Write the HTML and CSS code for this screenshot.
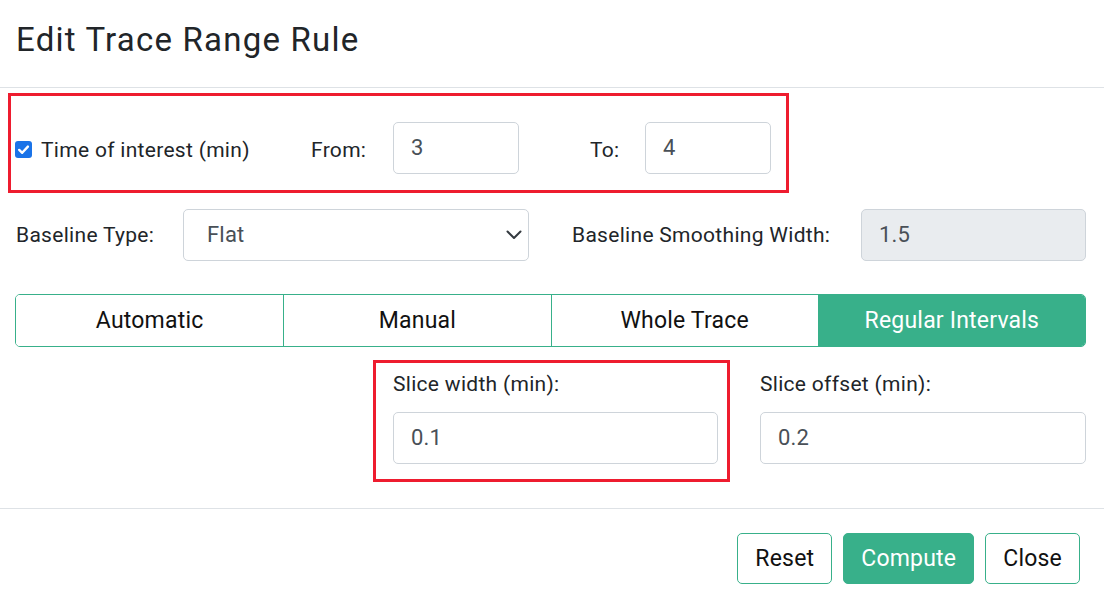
FILE: index.html
```html
<!DOCTYPE html>
<html lang="en">
<head>
<meta charset="utf-8">
<title>Edit Trace Range Rule</title>
<link rel="stylesheet" href="styles.css">
</head>
<body>
<div class="modal">
  <header class="modal-header">
    <h5 class="modal-title">Edit Trace Range Rule</h5>
  </header>

  <section class="modal-body">
    <div class="highlight toi-row">
      <label class="toi">
        <span class="check" aria-hidden="true">
          <svg viewBox="0 0 17 17" width="17" height="17"><rect x="0" y="0" width="17" height="17" rx="3" fill="#1a73e8"/><path d="M4.2 8.9 L7.2 11.8 L12.9 5.6" fill="none" stroke="#fff" stroke-width="2.4" stroke-linecap="round" stroke-linejoin="round"/></svg>
        </span>
        <span class="row-text">Time of interest (min)</span>
      </label>
      <span class="inline-label row-text from-label">From:</span>
      <div class="field small">3</div>
      <span class="inline-label row-text to-label">To:</span>
      <div class="field small">4</div>
    </div>

    <div class="baseline-row">
      <span class="inline-label type-label">Baseline Type:</span>
      <div class="field select">
        <span>Flat</span>
        <svg class="chevron" viewBox="0 0 16 10" width="16" height="10"><path d="M1.5 1.5 L8 8 L14.5 1.5" fill="none" stroke="#343a40" stroke-width="2" stroke-linecap="round" stroke-linejoin="round"/></svg>
      </div>
      <span class="inline-label smooth-label">Baseline Smoothing Width:</span>
      <div class="field disabled grow">1.5</div>
    </div>

    <div class="tabs">
      <button class="tab">Automatic</button>
      <button class="tab">Manual</button>
      <button class="tab">Whole Trace</button>
      <button class="tab active">Regular Intervals</button>
    </div>

    <div class="slice-row">
      <div class="highlight slice-col">
        <label class="field-label">Slice width (min):</label>
        <div class="field">0.1</div>
      </div>
      <div class="offset-col">
        <label class="field-label">Slice offset (min):</label>
        <div class="field">0.2</div>
      </div>
    </div>
  </section>

  <footer class="modal-footer">
    <button class="btn btn-outline">Reset</button>
    <button class="btn btn-primary">Compute</button>
    <button class="btn btn-outline">Close</button>
  </footer>
</div>
</body>
</html>
```

FILE: styles.css
```css
* {
  box-sizing: border-box;
}

html, body {
  margin: 0;
  padding: 0;
  background: #fff;
}

body {
  font-family: Roboto, "Noto Sans", "Liberation Sans", sans-serif;
  color: #212529;
  font-size: 21px;
  letter-spacing: 0.3px;
  line-height: 30px;
}

.modal {
  width: 1104px;
  height: 600px;
  overflow: hidden;
}

/* header */
.modal-header {
  height: 88px;
  padding: 21px 16px 0;
  border-bottom: 1px solid #dee2e6;
}

.modal-title {
  margin: 0;
  font-size: 33px;
  letter-spacing: 1.2px;
  line-height: 38px;
  font-weight: 400;
  color: #212529;
}

/* body */
.modal-body {
  padding: 5px 18px 0 15px;
}

.highlight {
  border: 3px solid #ee1c2f;
}

.inline-label {
  white-space: nowrap;
}

.field {
  height: 52px;
  border: 1px solid #ced4da;
  border-radius: 5px;
  background: #fff;
  color: #495057;
  font-size: 22px;
  letter-spacing: 0.2px;
  padding: 0 17px;
  display: flex;
  align-items: center;
}

.field.small {
  width: 126px;
}

.field.disabled {
  background: #e9ecef;
}

.grow {
  flex: 1;
}

/* time of interest */
.toi-row {
  display: flex;
  align-items: center;
  margin-left: -7px;
  width: 781px;
  height: 100px;
  padding: 26px 15px 16px 4px;
}

.toi {
  display: flex;
  align-items: center;
  width: 296px;
}

.row-text {
  padding-top: 4px;
}

.check {
  display: block;
  width: 17px;
  height: 17px;
  margin-right: 9px;
  margin-top: 2px;
}

.check svg {
  display: block;
}

.from-label {
  width: 82px;
}

.to-label {
  margin-left: 71px;
  width: 55px;
}

/* baseline */
.baseline-row {
  display: flex;
  align-items: center;
  margin-top: 16px;
}

.type-label {
  width: 168px;
  padding-left: 1px;
}

.select {
  width: 346px;
  justify-content: space-between;
  padding-left: 23px;
  padding-right: 6px;
}

.chevron {
  display: block;
}

.smooth-label {
  margin-left: 43px;
  width: 289px;
}

/* segmented tabs */
.tabs {
  display: grid;
  grid-template-columns: repeat(4, 1fr);
  margin-top: 33px;
  height: 53px;
  border: 1px solid #38b08a;
  border-radius: 5px;
  overflow: hidden;
}

.tab {
  font-family: inherit;
  font-size: 23px;
  letter-spacing: 0.2px;
  color: #111;
  background: #fff;
  border: 0;
  border-left: 1px solid #38b08a;
  padding: 0;
}

.tab:first-child {
  border-left: 0;
}

.tab.active {
  background: #38b08a;
  color: #fff;
}

/* slice settings */
.slice-row {
  display: flex;
  margin-top: 13px;
}

.slice-col {
  margin-left: 358px;
  width: 357px;
  padding: 6px 9px 15px 17px;
}

.offset-col {
  flex: 1;
  margin-left: 30px;
  padding-top: 9px;
}

.field-label {
  display: block;
  margin-bottom: 13px;
}

/* footer */
.modal-footer {
  margin-top: 26px;
  border-top: 1px solid #dee2e6;
  display: flex;
  justify-content: flex-end;
  gap: 11px;
  padding: 24px 24px 0 0;
}

.btn {
  font-family: inherit;
  font-size: 23px;
  letter-spacing: 0.2px;
  height: 51px;
  border-radius: 5px;
  padding: 0 17px;
  cursor: pointer;
}

.btn-outline {
  background: #fff;
  border: 1px solid #38b08a;
  color: #111;
}

.btn-primary {
  background: #38b08a;
  border: 1px solid #38b08a;
  color: #fff;
}
```
